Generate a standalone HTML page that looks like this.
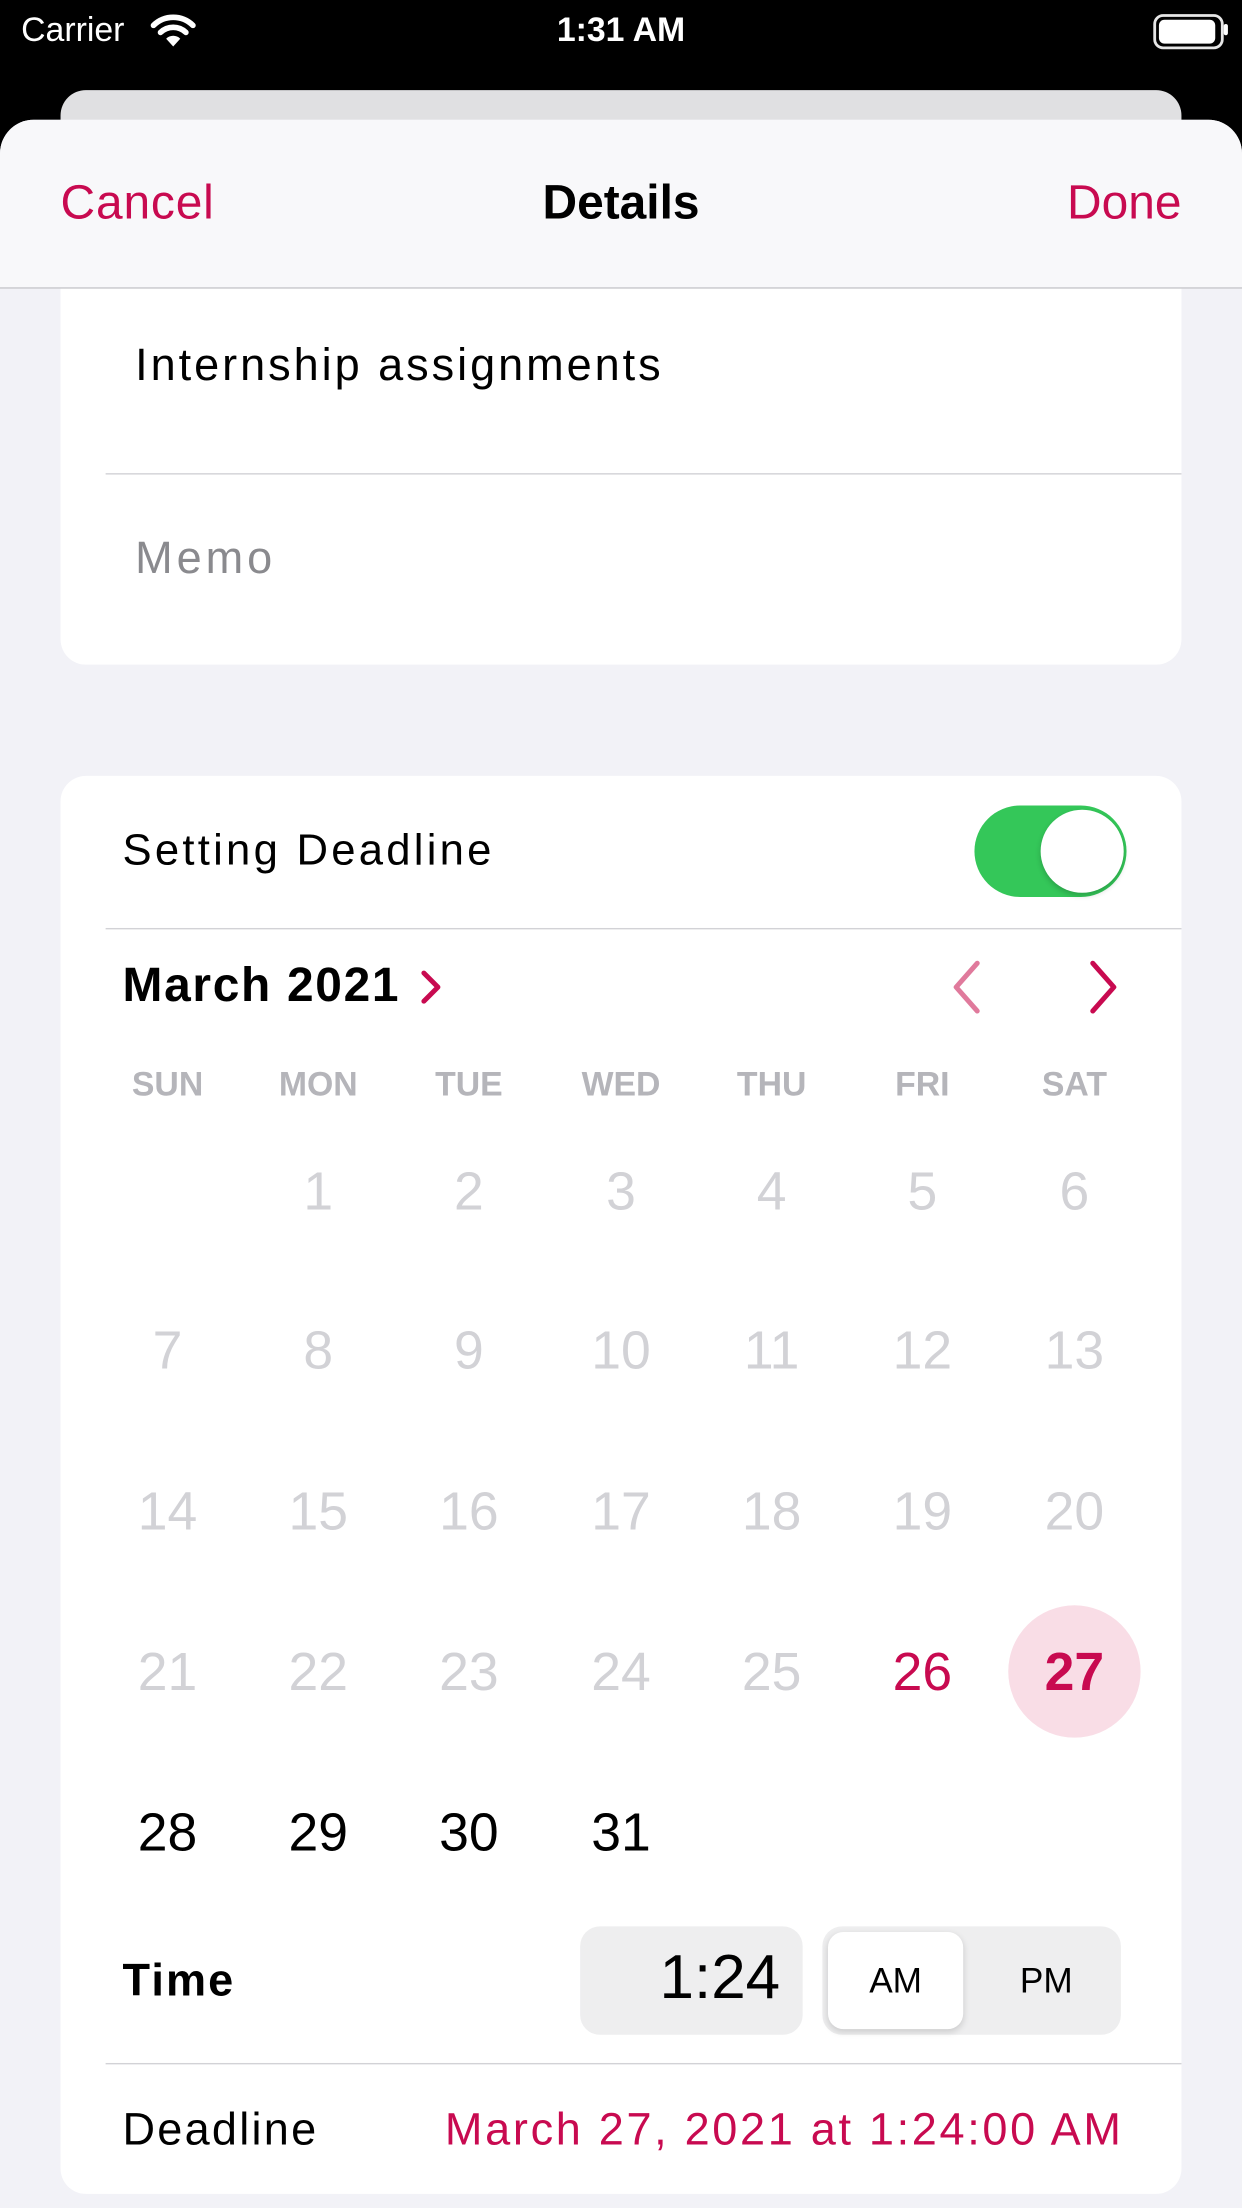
<!DOCTYPE html>
<html><head><meta charset="utf-8"><style>
html,body{margin:0;padding:0;width:1242px;height:2208px;overflow:hidden;background:#000;}
#w{width:882px;height:1568px;transform:scale(1.408163);transform-origin:0 0;position:relative;font-family:"Liberation Sans",sans-serif;background:#000;}
.a{position:absolute;}
.pk{color:#c80a50;}
.c{position:absolute;width:100px;margin-left:-50px;text-align:center;}
.d{font-size:38px;color:#d2d2d6;line-height:40px;}
</style></head><body><div id="w">
<div class="a" style="left:15px;top:8px;color:#fff;font-size:24px;">Carrier</div>
<svg class="a" style="left:106px;top:9px" width="34" height="26" viewBox="0 0 34 26"><path d="M3 9 A20 20 0 0 1 31 9" stroke="#fff" stroke-width="4" fill="none" stroke-linecap="round"/><path d="M8 14 A13 13 0 0 1 26 14" stroke="#fff" stroke-width="4" fill="none" stroke-linecap="round"/><path d="M17 24 L12 18.5 A7 7 0 0 1 22 18.5 Z" fill="#fff"/></svg>
<div class="a" style="left:0;width:882px;top:8px;text-align:center;color:#fff;font-size:24px;font-weight:bold;">1:31 AM</div>
<div class="a" style="left:819px;top:10px;width:46px;height:21px;border:2px solid #fff;border-radius:7px;opacity:.9"></div>
<div class="a" style="left:823px;top:14px;width:40px;height:17px;background:#fff;border-radius:4px"></div>
<div class="a" style="left:869px;top:17px;width:3px;height:8px;background:#fff;border-radius:2px"></div>
<div class="a" style="left:43px;top:64px;width:796px;height:60px;background:#e0e0e2;border-radius:18px 18px 0 0"></div>
<div class="a" style="left:0;top:85px;width:882px;height:1483px;background:#f2f2f7;border-radius:24px 24px 0 0;overflow:hidden">
 <div class="a" style="left:43px;top:100px;width:796px;height:287px;background:#fff;border-radius:18px"></div>
 <div class="a" style="left:0;top:0;width:882px;height:119px;background:#f8f8fa;border-bottom:1px solid #c8c8cc"></div>
 <div class="a pk" style="left:43px;top:40px;font-size:34px;letter-spacing:0.6px">Cancel</div>
 <div class="a" style="left:0;width:882px;text-align:center;top:40px;font-size:34px;font-weight:bold">Details</div>
 <div class="a pk" style="right:43px;top:40px;font-size:34px">Done</div>
</div>
<div class="a" style="left:96px;top:241px;font-size:32px;color:#000;letter-spacing:2.1px">Internship assignments</div>
<div class="a" style="left:75px;top:336px;width:764px;height:1px;background:#d2d2d6"></div>
<div class="a" style="left:96px;top:378px;font-size:32px;color:#8a8a8e;letter-spacing:2.8px">Memo</div>
<div class="a" style="left:43px;top:551px;width:796px;height:1007px;background:#fff;border-radius:18px"></div>
<div class="a" style="left:87px;top:586px;font-size:31px;letter-spacing:2.3px">Setting Deadline</div>
<div class="a" style="left:692px;top:572px;width:108px;height:65px;background:#34c759;border-radius:33px"></div>
<div class="a" style="left:739px;top:575px;width:59px;height:59px;background:#fff;border-radius:30px;box-shadow:0 2px 4px rgba(0,0,0,.2)"></div>
<div class="a" style="left:75px;top:659px;width:764px;height:1px;background:#d2d2d6"></div>
<div class="a" style="left:87px;top:681px;font-size:34px;font-weight:bold;letter-spacing:1.2px">March 2021</div>
<svg class="a" style="left:296px;top:687px" width="20" height="28" viewBox="0 0 20 28"><path d="M5 4 L15 14 L5 24" stroke="#c80a50" stroke-width="3.5" fill="none" stroke-linecap="round" stroke-linejoin="round"/></svg>
<svg class="a" style="left:674px;top:681px" width="26" height="40" viewBox="0 0 26 40"><path d="M20 3 L5 20 L20 37" stroke="#e07a9c" stroke-width="3.5" fill="none" stroke-linecap="round" stroke-linejoin="round"/></svg>
<svg class="a" style="left:770px;top:681px" width="26" height="40" viewBox="0 0 26 40"><path d="M6 3 L21 20 L6 37" stroke="#c80a50" stroke-width="3.5" fill="none" stroke-linecap="round" stroke-linejoin="round"/></svg>
<div class="a" style="left:716px;top:1140px;width:94px;height:94px;border-radius:50%;background:#f9dde6"></div>
<div id="cal"></div>
<div class="c" style="left:119px;top:757px;font-size:24px;font-weight:bold;color:#b5b5ba">SUN</div>
<div class="c" style="left:226px;top:757px;font-size:24px;font-weight:bold;color:#b5b5ba">MON</div>
<div class="c" style="left:333px;top:757px;font-size:24px;font-weight:bold;color:#b5b5ba">TUE</div>
<div class="c" style="left:441px;top:757px;font-size:24px;font-weight:bold;color:#b5b5ba">WED</div>
<div class="c" style="left:548px;top:757px;font-size:24px;font-weight:bold;color:#b5b5ba">THU</div>
<div class="c" style="left:655px;top:757px;font-size:24px;font-weight:bold;color:#b5b5ba">FRI</div>
<div class="c" style="left:763px;top:757px;font-size:24px;font-weight:bold;color:#b5b5ba">SAT</div>
<script>
var xs=[119,226,333,441,548,655,763],ys=[846,959,1073,1187,1301],h='';
for(var n=1;n<=31;n++){var i=n;var col=i%7,row=Math.floor(i/7);var st='';
if(n==26)st='color:#c80a50';else if(n==27)st='color:#c80a50;font-weight:bold';else if(n>=28)st='color:#000';
h+='<div class="c d" style="left:'+xs[col]+'px;top:'+(ys[row]-19)+'px;'+st+'">'+n+'</div>';}
document.getElementById('cal').innerHTML=h;
</script>
<div class="a" style="left:87px;top:1388px;font-size:32px;font-weight:bold;letter-spacing:1.5px">Time</div>
<div class="a" style="left:412px;top:1368px;width:158px;height:77px;background:#eeeeef;border-radius:14px"></div>
<div class="a" style="left:412px;top:1380px;width:142px;text-align:right;font-size:44px">1:24</div>
<div class="a" style="left:584px;top:1368px;width:212px;height:77px;background:#eeeeef;border-radius:14px"></div>
<div class="a" style="left:588px;top:1372px;width:96px;height:69px;background:#fff;border-radius:11px;box-shadow:0 2px 5px rgba(0,0,0,.15)"></div>
<div class="a" style="left:588px;top:1393px;width:96px;text-align:center;font-size:25px">AM</div>
<div class="a" style="left:692px;top:1393px;width:102px;text-align:center;font-size:25px">PM</div>
<div class="a" style="left:75px;top:1465px;width:764px;height:1px;background:#d2d2d6"></div>
<div class="a" style="left:87px;top:1494px;font-size:32px;letter-spacing:1.6px">Deadline</div>
<div class="a pk" style="right:86px;top:1494px;font-size:32px;letter-spacing:1.9px;margin-right:-1.9px">March 27, 2021 at 1:24:00 AM</div>
</div></body></html>
